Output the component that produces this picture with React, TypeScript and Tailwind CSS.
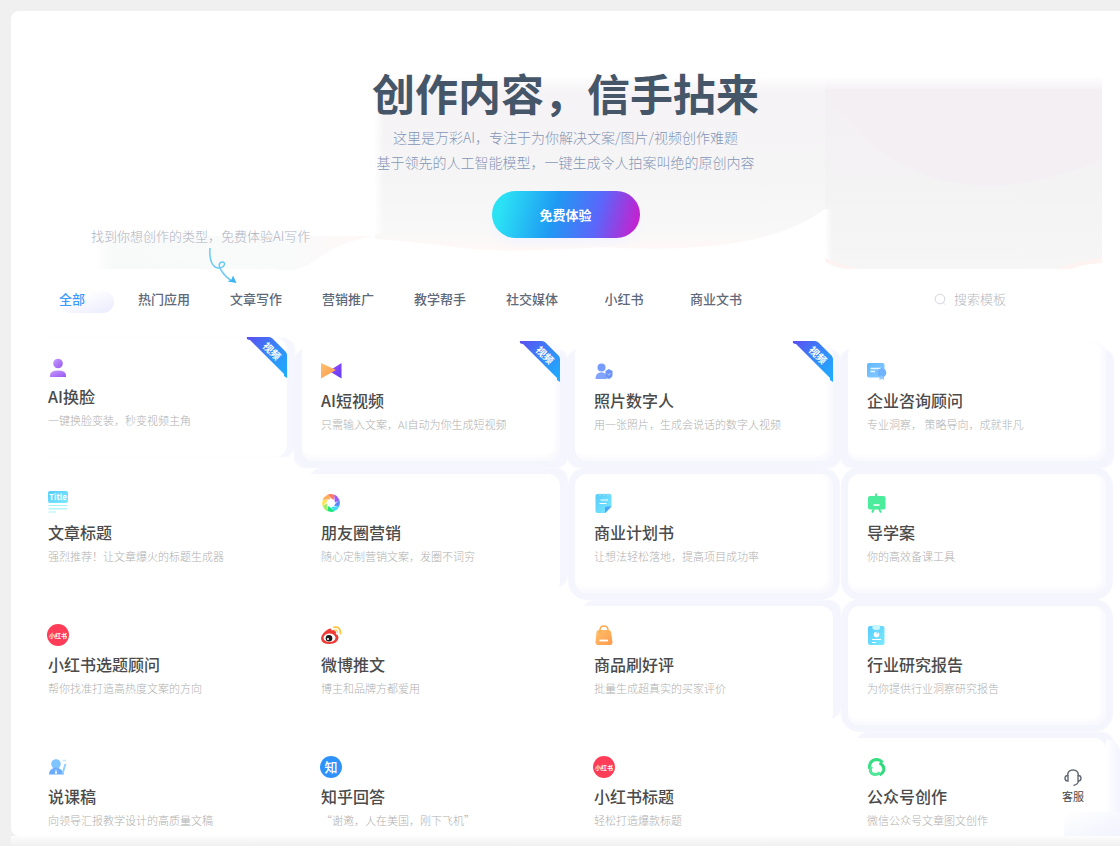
import {ReactNode, useState} from "react";

interface Template {
    title : string,
    desc : string,
    icon : ReactNode,
    video? : boolean,
    className? : string
}

const tabs = ['全部', '热门应用', '文章写作', '营销推广', '教学帮手', '社交媒体', '小红书', '商业文书']

// how the soft groove runs round a card
const groove = {
    right: 'shadow-[8px_0_2px_#f5f6fe]',
    below: 'shadow-[8px_7px_2px_#f5f5fe,-8px_7px_2px_#f5f5fe,inset_-3px_-3px_6px_#f7f7fe]',
    around: 'shadow-[0_0_1px_7px_#f5f5fe,inset_-3px_-3px_6px_#f7f7fe]',
    corner: 'shadow-[8px_-6px_2px_#f5f5fe]'
}

function RedBookIcon() {
    return (
        <>
            <circle cx="10" cy="11" r="11" fill="#ff3d58"/>
            <text x="10" y="13.5" textAnchor="middle" fontSize="6" fontWeight="700" fill="#fff">小红书</text>
        </>
    );
}

function LensIcon() {
    const colors = ['#ff7a66', '#a259f7', '#5b8cff', '#3fdcf5', '#19e57c', '#a6ee6a', '#ffe45c', '#ffb05c']
    return (
        <>
            {colors.map((color, i) => (
                <path key={color} d="M6.5 2.8 Q10 1.2 14 3.2 L12.4 8.2 Z" fill={color} transform={`rotate(${i * 45} 10 11)`}/>
            ))}
            <circle cx="10" cy="11" r="3.8" fill="#fff"/>
        </>
    );
}

const templates : Template[] = [
    {
        title: 'AI换脸', desc: '一键换脸变装，秒变视频主角', video: true,
        className: `-translate-y-1 ${groove.right}`,
        icon: <>
            <circle cx="10" cy="7.5" r="4.8" fill="url(#purple)"/>
            <path d="M2 21 V19.5 Q2 14.5 10 14.5 Q18 14.5 18 19.5 V21 Z" fill="url(#purple)"/>
        </>
    },
    {
        title: 'AI短视频', desc: '只需输入文案，AI自动为你生成短视频', video: true, className: groove.below,
        icon: <>
            <path d="M20.5 3 V18.5 L8 11 Z" fill="url(#violet)"/>
            <path d="M0 3 L15 10 L0 18.5 Z" fill="url(#orange)"/>
        </>
    },
    {
        title: '照片数字人', desc: '用一张照片，生成会说话的数字人视频', video: true, className: groove.below,
        icon: <>
            <circle cx="7.5" cy="7.5" r="4" fill="#769cff"/>
            <path d="M1.5 19 Q1.5 12.3 7.5 12.3 Q13 12.3 13 19 Z" fill="#82a4ff"/>
            <path d="M11.500 11 L14.800 9 L18.500 11 V15 Q18.500 17.500 14.800 19 Q11.500 17.500 11.500 15 Z" fill="#6b93fb"/>
            <path d="M13.500 14 L14.800 15.200 L16.500 13" stroke="#bcd0ff" strokeWidth="1" fill="none"/>
        </>
    },
    {
        title: '企业咨询顾问', desc: '专业洞察， 策略导向，成就非凡', className: groove.below,
        icon: <>
            <rect x="0" y="3" width="17.5" height="14.5" rx="2" fill="url(#sky)"/>
            <path d="M3.500 8.500 H14 M3.500 11.500 H8" stroke="#e9f5ff" strokeWidth="1.400"/>
            <circle cx="14.800" cy="12.800" r="4.500" fill="#6fb2ff"/>
            <path d="M12.500 17 L14.800 15.500 L17 17 V20 L14.800 18.800 L12.500 20 Z" fill="#91c9ff"/>
        </>
    },
    {
        title: '文章标题', desc: '强烈推荐！让文章爆火的标题生成器',
        icon: <>
            <rect x="0" y="-1" width="20" height="12" rx="2" fill="url(#cyan)"/>
            <text x="10" y="8" textAnchor="middle" fontSize="8" fontWeight="700" fill="#fff">Title</text>
            <path d="M0.5 13.500 H19 M0.5 16.800 H19 M0.5 20 H8" stroke="#a5f3f8" strokeWidth="1.200"/>
        </>
    },
    {title: '朋友圈营销', desc: '随心定制营销文案，发圈不词穷', className: groove.corner, icon: <LensIcon/>},
    {
        title: '商业计划书', desc: '让想法轻松落地，提高项目成功率', className: groove.around,
        icon: <>
            <path d="M3.500 2 H15.500 Q17.500 2 17.500 4 V14.500 L11.500 21 H3.500 Q1.500 21 1.500 19 V3.500 Q1.500 2 3.500 2 Z" fill="url(#cyan)"/>
            <path d="M11 21 V16 Q11 14.500 12.500 14.500 H17.500 Z" fill="#4aa5ff"/>
            <path d="M6 1 V4 M10 1 V4 M14 1 V4" stroke="#a6e6ff" strokeWidth="1"/>
            <path d="M6.500 8 H14 M5.500 11.500 H12.500" stroke="#fff" strokeWidth="1.200"/>
        </>
    },
    {
        title: '导学案', desc: '你的高效备课工具', className: groove.around,
        icon: <>
            <path d="M9 1.500 V4 M7 17 L5 20.500 M12 17 L14 20.500" stroke="#3fe892" strokeWidth="1.800"/>
            <rect x="1" y="4" width="17.500" height="13.500" rx="2" fill="#4bec9b"/>
            <path d="M6.500 13 H12.500" stroke="#fff" strokeWidth="1.600"/>
        </>
    },
    {title: '小红书选题顾问', desc: '帮你找准打造高热度文案的方向', icon: <RedBookIcon/>},
    {
        title: '微博推文', desc: '博主和品牌方都爱用',
        icon: <>
            <path d="M7.500 5 Q10.500 3.500 10.500 6.500 Q14.500 5 15 8.500 L14.800 10 Q17.500 10.800 17.500 13.500 Q17 19.500 8.500 20 Q0.500 20 0 14.500 Q0.500 9 7.500 5 Z" fill="#f03a36"/>
            <ellipse cx="8.500" cy="13.800" rx="6" ry="4.300" fill="#fff"/>
            <circle cx="8" cy="14.200" r="3.300" fill="#1c1c1c"/>
            <circle cx="7" cy="15" r="1.100" fill="#fff"/>
            <path d="M13 3.200 Q19.500 2 19.500 9.500" stroke="#ffc53d" strokeWidth="1.800" fill="none" strokeLinecap="round"/>
            <path d="M13.500 6 Q16.500 5.500 16.500 8.800" stroke="#ffd873" strokeWidth="1.400" fill="none" strokeLinecap="round"/>
        </>
    },
    {
        title: '商品刷好评', desc: '批量生成超真实的买家评价', className: groove.corner,
        icon: <>
            <path d="M4.500 6 H14.500 Q16.500 6 17 8 L18.500 18 Q18.500 21 16 21 H4 Q1.500 21 1.500 18 L2.500 8 Q3 6 4.500 6 Z" fill="url(#orange)"/>
            <path d="M6 9 V6 Q6 2 10 2 Q14 2 14 6 V9" stroke="#ffa94a" strokeWidth="1.500" fill="none"/>
            <path d="M5.500 16.500 H14" stroke="#fff" strokeWidth="1.800"/>
        </>
    },
    {
        title: '行业研究报告', desc: '为你提供行业洞察研究报告', className: groove.around,
        icon: <>
            <rect x="1" y="2" width="16.5" height="19" rx="2" fill="url(#cyan)"/>
            <path d="M5.500 1 H13 V4 Q13 6 9.500 6 Q5.500 6 5.500 4 Z" fill="#c9f5ff"/>
            <circle cx="9.500" cy="10.500" r="2.800" fill="#fff"/>
            <path d="M9.500 10.500 V7.500 H12.500 Z" fill="#74dcff"/>
            <path d="M5 15.500 H14 M5 18.500 H9" stroke="#fff" strokeWidth="1.200"/>
        </>
    },
    {
        title: '说课稿', desc: '向领导汇报教学设计的高质量文稿',
        icon: <>
            <circle cx="8" cy="8" r="4.800" fill="#7fc4ff"/>
            <path d="M1 18.500 Q1 12.500 8 11.500 Q14.500 12.500 16 18.500 Z" fill="#6bacff"/>
            <path d="M8 13 L9 17 L8 18.500 L7 17 Z" fill="#fff"/>
            <path d="M14.500 17.500 L17.500 8" stroke="#8fd0ff" strokeWidth="2"/>
            <path d="M14.500 4.500 H18" stroke="#bfeaff" strokeWidth="1.500"/>
        </>
    },
    {
        title: '知乎回答', desc: '“谢邀，人在美国，刚下飞机”',
        icon: <>
            <circle cx="10" cy="11" r="11" fill="#2f92fb"/>
            <text x="10" y="15.500" textAnchor="middle" fontSize="13" fontWeight="500" fill="#fff">知</text>
        </>
    },
    {title: '小红书标题', desc: '轻松打造爆款标题', icon: <RedBookIcon/>},
    {
        title: '公众号创作', desc: '微信公众号文章图文创作', className: groove.corner,
        icon: <g fill="none" strokeWidth="3">
            <path d="M2.500 13 Q2 4 9.500 3.500 Q13 3.500 15.500 6.500" stroke="#35de83"/>
            <path d="M12.500 7 Q18 10 16.500 15 Q15.500 17.500 12.500 19" stroke="#2fd97c"/>
            <path d="M13 16.800 Q8.500 20 5 17.500 Q2 15 4.500 10.500" stroke="#4fe697"/>
        </g>
    }
]

function Gradients() {
    return (
        <svg width="0" height="0" className="absolute" aria-hidden="true">
            <defs>
                <linearGradient id="purple" x1="0" y1="0" x2="1" y2="1">
                    <stop offset="0" stopColor="#c79cff"/><stop offset="1" stopColor="#9757f0"/>
                </linearGradient>
                <linearGradient id="violet" x1="0" y1="0" x2="1" y2="1">
                    <stop offset="0" stopColor="#a44dff"/><stop offset="1" stopColor="#5b3df5"/>
                </linearGradient>
                <linearGradient id="orange" x1="0" y1="0" x2="1" y2="1">
                    <stop offset="0" stopColor="#ffc06b"/><stop offset="1" stopColor="#ff9a4d"/>
                </linearGradient>
                <linearGradient id="sky" x1="0" y1="0" x2="1" y2="1">
                    <stop offset="0" stopColor="#5fb8ff"/><stop offset="1" stopColor="#8ccbff"/>
                </linearGradient>
                <linearGradient id="cyan" x1="0" y1="0" x2="1" y2="1">
                    <stop offset="0" stopColor="#56ccfb"/><stop offset="1" stopColor="#7de9fd"/>
                </linearGradient>
                <linearGradient id="ribbon" x1="0" y1="0" x2="1" y2="1">
                    <stop offset="0" stopColor="#5a4ff0"/><stop offset="0.6" stopColor="#2f93fb"/><stop offset="1" stopColor="#1cb0ff"/>
                </linearGradient>
            </defs>
        </svg>
    );
}

function HeroBackdrop() {
    return (
        <svg className="absolute left-0 top-[60px] h-[200px] w-full" viewBox="0 0 1109 200" preserveAspectRatio="none" aria-hidden="true">
            <defs>
                <linearGradient id="haze" x1="0" y1="0" x2="0" y2="1">
                    <stop offset="0" stopColor="#f4f1f4" stopOpacity="0"/>
                    <stop offset="0.1" stopColor="#f5f3f5"/>
                    <stop offset="0.6" stopColor="#f6f5f6"/>
                    <stop offset="0.88" stopColor="#f8f8f8"/>
                    <stop offset="1" stopColor="#fff8f7"/>
                </linearGradient>
                <linearGradient id="hazeRight" x1="0" y1="0" x2="0" y2="1">
                    <stop offset="0" stopColor="#f3eff3" stopOpacity="0"/>
                    <stop offset="0.08" stopColor="#f3f0f3"/>
                    <stop offset="0.6" stopColor="#f4f3f4"/>
                    <stop offset="1" stopColor="#f5f6f5"/>
                </linearGradient>
                <linearGradient id="hazeLeft" x1="0" y1="0" x2="1" y2="0">
                    <stop offset="0" stopColor="#f8f8f8" stopOpacity="0"/>
                    <stop offset="0.06" stopColor="#f8f9f9"/>
                    <stop offset="0.7" stopColor="#f9fafa"/>
                    <stop offset="1" stopColor="#fff8f7"/>
                </linearGradient>
                <linearGradient id="fadeIn" x1="0" y1="0" x2="1" y2="0">
                    <stop offset="0" stopColor="#fff"/>
                    <stop offset="1" stopColor="#fff" stopOpacity="0"/>
                </linearGradient>
            </defs>
            <path d="M84 165 H364 Q330 170 308 187 T262 198 H84 Z" fill="url(#hazeLeft)"/>
            <path d="M364 5 H814 V138 Q750 186 590 176 Q480 184 430 174 Q395 170 364 168 Z" fill="url(#haze)"/>
            <rect x="363" y="5" width="10" height="158" fill="url(#fadeIn)"/>
            <path d="M814 5 H1091 V192 Q1075 192 1060 198 H836 Q825 197 814 191 Z" fill="url(#hazeRight)"/>
            <path d="M814 18 H1091 V88 Q960 145 870 80 Q835 50 814 18 Z" fill="#f3eff3"/>
            <rect x="814" y="138" width="7" height="60" fill="url(#fadeIn)"/>
            <path d="M814 191 V187 Q825 192 848 198 H836 Z M1091 187 V192 Q1075 192 1060 198 H1045 Q1065 190 1091 187 Z" fill="#fff3f2"/>
        </svg>
    );
}

function TemplateCard(props : {template : Template}) {
    const {title, desc, icon, video, className} = props.template
    return (
        <a href="#" className={`relative block h-[119px] rounded-xl bg-white px-[19px] pt-[18px] ${className ?? ''}`}>
            <svg width="22" height="22" viewBox="0 0 22 22" className="overflow-visible" aria-hidden="true">{icon}</svg>
            <h3 className="mt-1.5 text-base leading-6 font-medium text-[#4b4b4b]">{title}</h3>
            <p className="mt-1 text-[11px] leading-4 font-light text-[#b0b0b0]">{desc}</p>
            {video && <svg width="41" height="41" viewBox="0 0 41 41" className="absolute -top-px right-0">
                <path d="M1 0 H23 Q25 0 26.500 1.500 L39.500 14.500 Q41 16 41 18 V41 L38 39 V37 L4 3 Q0 3 1 0 Z" fill="url(#ribbon)"/>
                <text x="26" y="18" textAnchor="middle" fontSize="10" fontWeight="700" fill="#fff" transform="rotate(45 26 14)">视频</text>
            </svg>}
        </a>
    );
}

function App() {
    const [active, setActive] = useState('全部')
    const [keyword, setKeyword] = useState('')

    return (
        <div className="relative flex h-screen flex-col overflow-hidden bg-[#f0f0f0] pt-[11px] pl-[11px] font-['Noto_Sans_CJK_SC',sans-serif]">
            <Gradients/>
            <main className="relative min-h-0 flex-1 overflow-hidden rounded-l-lg bg-white pr-3.5 pl-[18px]">
                <HeroBackdrop/>
                <section className="relative -mr-3.5 -ml-[18px] flex flex-col items-center pt-[53px] text-center">
                    <h1 className="text-[43px] leading-[56px] font-bold text-[#465669]">创作内容，信手拈来</h1>
                    <p className="mt-[5px] text-sm leading-[25px] font-light text-[#8595b5]">
                        这里是万彩AI，专注于为你解决文案/图片/视频创作难题<br/>
                        基于领先的人工智能模型，一键生成令人拍案叫绝的原创内容
                    </p>
                    <button className="mt-4 h-[47px] w-[148px] rounded-full bg-[linear-gradient(105deg,#2be2f5_8%,#1f9af3_42%,#5b66fa_70%,#c024d0_95%)] text-[13px] font-bold text-white shadow-[0_5px_8px_#f3f4fe]">免费体验</button>
                </section>

                <div className="relative -mt-3 pl-[62px] text-[13px] leading-5 font-light text-[#b0b2c0]">
                    找到你想创作的类型，免费体验AI写作
                    <svg width="30" height="38" viewBox="0 0 30 38" className="absolute top-[21px] left-[179px]" aria-hidden="true">
                        <path d="M2 1 C1 12 4 22 12 21 C17 20 18 15 14.500 15 C11 15 10 19 13 23 C16 28 19 31 24 34" fill="none" stroke="#6bcbf5" strokeWidth="1.500"/>
                        <path d="M28.500 36 L19.500 34.500 L23.500 32.500 L25 28.500 Z" fill="#3fb4f5"/>
                    </svg>
                </div>

                <div className="relative mt-[41px] -ml-[3px] flex h-6 items-center justify-between">
                    <nav className="flex">
                        {tabs.map((tab) => (
                            <button key={tab} onClick={() => setActive(tab)} className={`relative h-6 w-[92px] text-[13px] font-medium ${tab === active ? 'text-[#3d9bff]' : 'text-[#5e6979]'}`}>
                                {tab === active && <span className="absolute top-1 right-1 h-[22px] w-[54px] rounded-full bg-[linear-gradient(160deg,#ffffff_25%,#eeeffe_85%)]"/>}
                                <span className="relative">{tab}</span>
                            </button>
                        ))}
                    </nav>
                    <label className="flex items-center gap-2 pr-5">
                        <svg width="12" height="12" viewBox="0 0 12 12" aria-hidden="true">
                            <circle cx="6" cy="6" r="4.800" fill="none" stroke="#d3d7dd" strokeWidth="1"/>
                            <path d="M9 9.500 L11 11.500" stroke="#d3d7dd"/>
                        </svg>
                        <input value={keyword} onChange={(o) => setKeyword(o.target.value)} placeholder="搜索模板" aria-label="搜索模板" className="w-[132px] bg-transparent text-[13px] font-light outline-none placeholder:text-[#b5b9c2]"/>
                    </label>
                </div>

                <div className="relative mt-[31px] grid grid-cols-4 gap-x-[15px] gap-y-[13px]">
                    {templates.map((template) => <TemplateCard key={template.title} template={template}/>)}
                </div>

                <div className="absolute right-0 bottom-0 h-24 w-3.5 rounded-tr-xl bg-linear-to-r from-white to-[#f3f4fe]"/>
                <div className="absolute right-0 bottom-0 h-6 w-14 rounded-tl-lg bg-linear-to-br from-white to-[#f1f3fe]"/>
                <button className="absolute right-9 bottom-8 flex flex-col items-center text-[11px] leading-4 text-[#454545]">
                    <svg width="18" height="20" viewBox="0 0 18 20" fill="none" stroke="#626a72" strokeWidth="1.400" aria-hidden="true">
                        <path d="M3.500 8 Q3.500 2 9 2 Q14.500 2 14.500 8"/>
                        <path d="M4 7.500 V13 Q1 13 1 10.200 Q1 7.500 4 7.500 Z M14 7.500 V13 Q17 13 17 10.200 Q17 7.500 14 7.500 Z"/>
                        <path d="M14.500 13 Q14 16.500 9.500 17.500"/>
                    </svg>
                    客服
                </button>
            </main>
            <div className="h-2.5 bg-linear-to-b from-[#fdfdfd] to-[#f0f0f0]"/>
        </div>
    );
}

export default App;
